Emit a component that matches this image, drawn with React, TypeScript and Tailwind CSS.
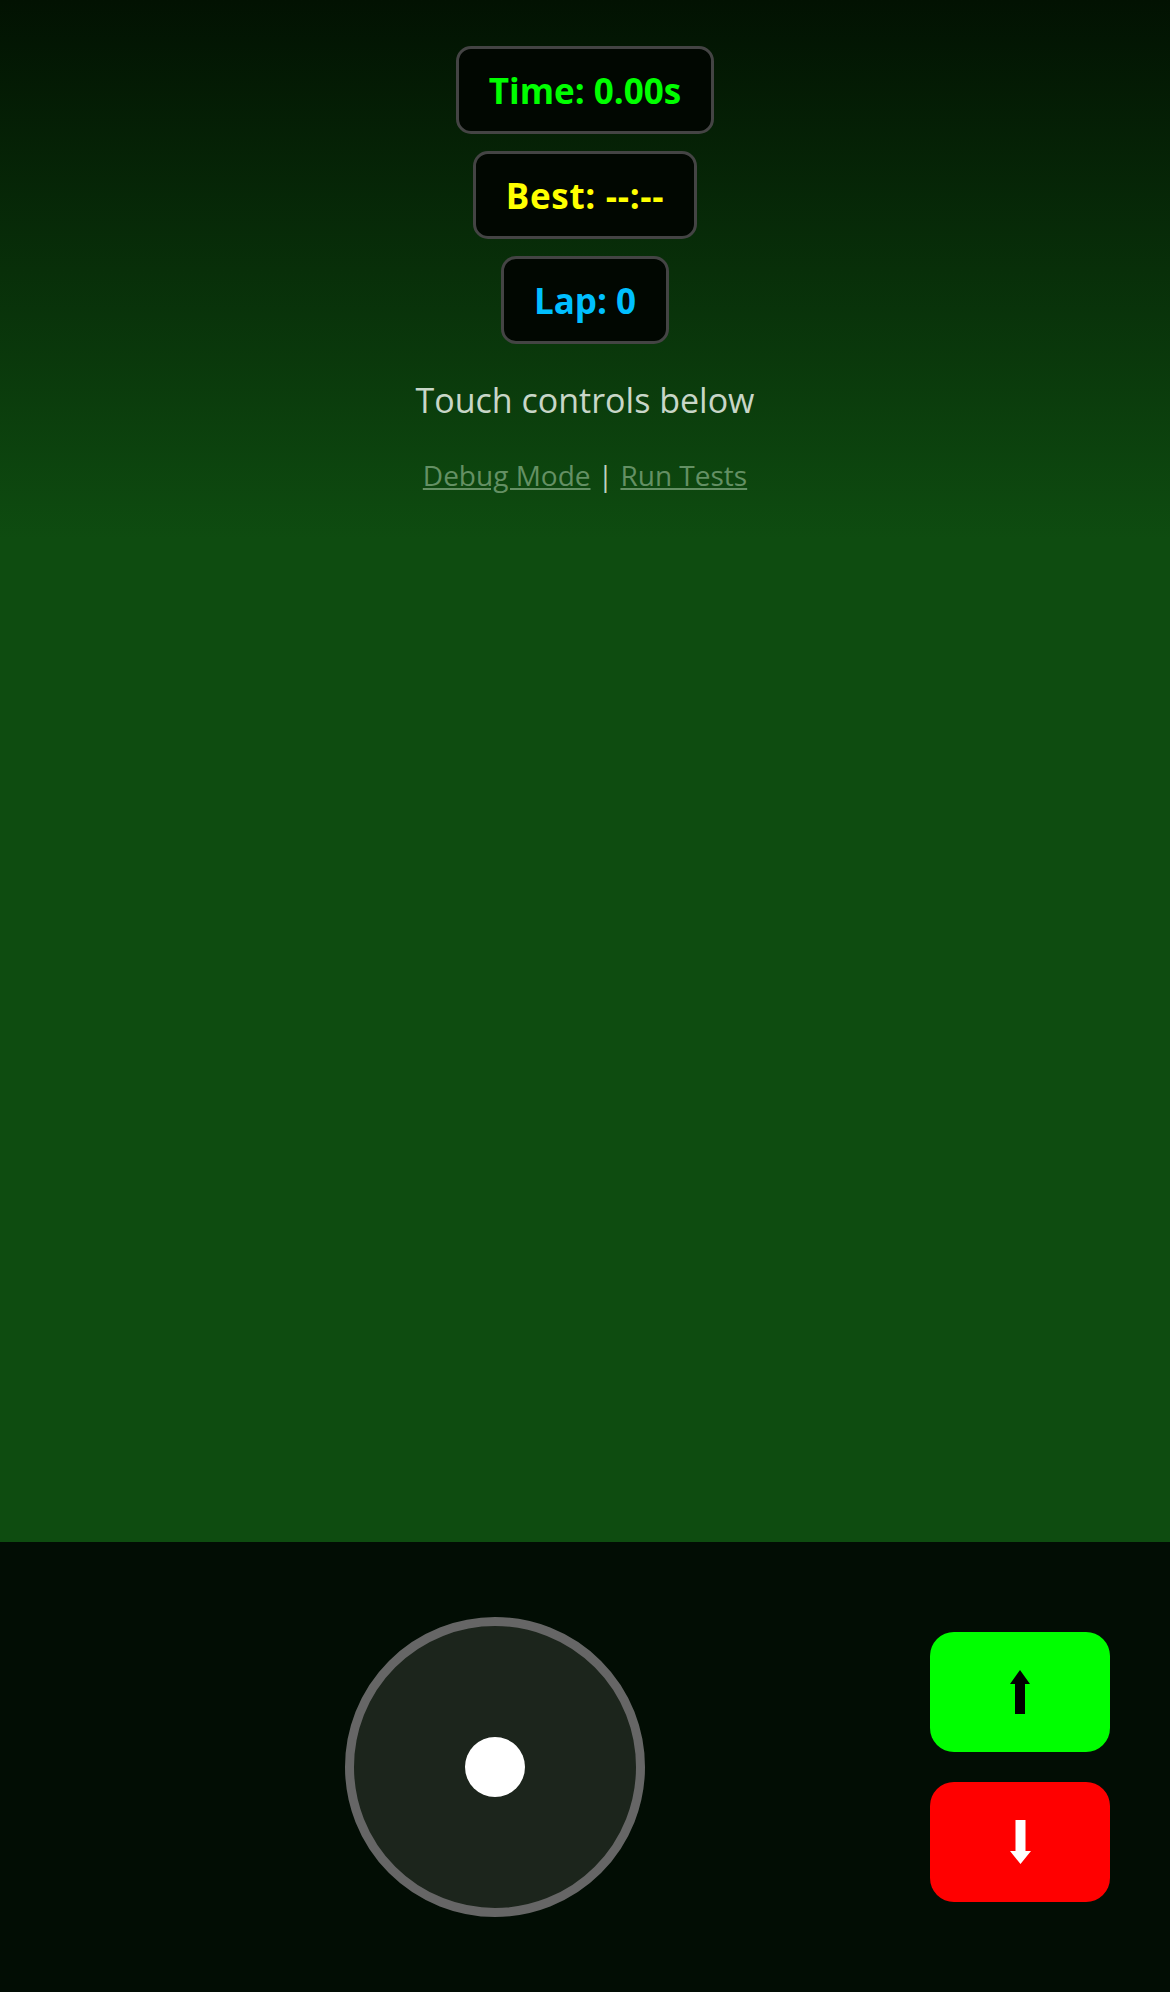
const hudFont = { fontFamily: '"Open Sans", "Noto Sans", sans-serif' };

const stats = [
  { label: "Time: 0.00s", color: "text-[#00ff00]" },
  { label: "Best: --:--", color: "text-[#ffff00] tracking-[0.7px]" },
  { label: "Lap: 0", color: "text-[#00bfff]" },
];

const ArrowUp = () => (
  <svg width="20" height="44" viewBox="0 0 20 44">
    <polygon points="10,0 20,14 15,14 15,44 5,44 5,14 0,14" fill="#000" />
  </svg>
);

const ArrowDown = () => (
  <svg width="21" height="44" viewBox="0 0 21 44">
    <polygon points="5.5,0 15.5,0 15.5,31 21,31 10.5,44 0,31 5.5,31" fill="#fff" />
  </svg>
);

const App = () => {
  return (
    <div className="w-full h-[1992px] flex flex-col overflow-hidden" style={hudFont}>
      <div className="h-[1542px] bg-[linear-gradient(to_bottom,#021202_0px,#0e4c10_540px,#0e4c10_100%)]">
        <div className="flex flex-col items-center pt-[46px] gap-[17px]">
          {stats.map((s) => (
            <div
              key={s.label}
              className={`h-[88px] px-[30px] flex items-center border-[3px] border-[#444444] rounded-[15px] bg-[#010701] text-[35px] font-bold leading-none ${s.color}`}
            >
              {s.label}
            </div>
          ))}
        </div>
        <p className="mt-[32px] text-center text-[34px] leading-[48px] text-[#c8d6c8]">
          Touch controls below
        </p>
        <p className="mt-[33px] text-center text-[28px] leading-[36px] text-[#c0d2c0]">
          <a href="#" className="underline text-[#649064]">Debug Mode</a>
          {" | "}
          <a href="#" className="underline text-[#649064]">Run Tests</a>
        </p>
      </div>

      <div className="flex-1 bg-[#020d04] flex items-center pl-[345px] pr-[60px]">
        <div className="w-[300px] h-[300px] rounded-full border-[9px] border-[#666666] bg-[#1c251c] flex items-center justify-center">
          <div className="w-[60px] h-[60px] rounded-full bg-white" />
        </div>
        <div className="flex-1" />
        <div className="flex flex-col gap-[30px]">
          <button className="w-[180px] h-[120px] rounded-[24px] bg-[#00ff00] flex items-center justify-center">
            <ArrowUp />
          </button>
          <button className="w-[180px] h-[120px] rounded-[24px] bg-[#ff0000] flex items-center justify-center">
            <ArrowDown />
          </button>
        </div>
      </div>
    </div>
  );
};

export default App;
